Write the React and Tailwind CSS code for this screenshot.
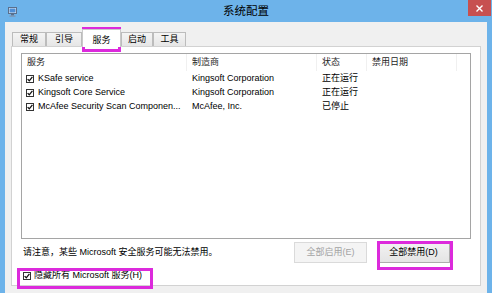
import React from 'react';

const FONT = { fontFamily: '"Liberation Sans", "Noto Sans CJK SC", sans-serif' };

const services = [
  { name: 'KSafe service', maker: 'Kingsoft Corporation', state: '正在运行' },
  { name: 'Kingsoft Core Service', maker: 'Kingsoft Corporation', state: '正在运行' },
  { name: 'McAfee Security Scan Componen...', maker: 'McAfee, Inc.', state: '已停止' },
];

function Check() {
  return (
    <span className="w-[8px] h-[8px] border border-[#333] bg-white flex items-center justify-center shrink-0">
      <svg width="6" height="6" viewBox="0 0 6 6">
        <path d="M0.6 3.1 L2.3 4.8 L5.4 0.9" fill="none" stroke="#111" strokeWidth="1.3" />
      </svg>
    </span>
  );
}

function Tab({ label, active, w }) {
  if (active) {
    return (
      <div className={`h-[18px] -mb-px z-10 pt-[4px] flex justify-center bg-white border border-b-0 border-[#c9c9c9] text-[9px] text-black ${w}`}>
        {label}
      </div>
    );
  }
  return (
    <div className={`h-[14px] flex items-center justify-center bg-gradient-to-b from-[#f4f4f4] to-[#e6e6e6] border border-b-0 border-[#bcbcbc] text-[9px] text-black ${w}`}>
      {label}
    </div>
  );
}

export default function App() {
  return (
    <div className="relative w-[492px] h-[293px] bg-[#6db3ea] flex flex-col overflow-hidden" style={FONT}>
      {/* Title bar */}
      <div className="h-[22px] grid grid-cols-[1fr_auto_1fr] shrink-0">
        <div className="pl-[8px] pt-[7px]">
          <svg width="9" height="10" viewBox="0 0 9 10">
            <rect x="0.5" y="0.5" width="8" height="6" fill="#dfe9f5" stroke="#5a6f8c" />
            <rect x="1.5" y="1.5" width="6" height="4" fill="#4f8fd6" />
            <rect x="3" y="7" width="3" height="1.5" fill="#5a6f8c" />
            <rect x="1.5" y="8.5" width="6" height="1.2" fill="#8093ad" />
          </svg>
        </div>
        <div className="text-[11.5px] text-black flex items-center pt-px">系统配置</div>
        <div className="flex justify-end items-start pr-[1px]">
          <div className="w-[23px] h-[16px] bg-[#c75050] flex items-center justify-center">
            <svg width="7" height="7" viewBox="0 0 7 7">
              <path d="M0.5 0.5 L6.5 6.5 M6.5 0.5 L0.5 6.5" stroke="#fff" strokeWidth="1.4" />
            </svg>
          </div>
        </div>
      </div>

      {/* Dialog body */}
      <div className="flex-1 mx-[5px] bg-[#f0f0f0] px-[6px] pt-[7px] flex flex-col">
        <div className="h-[17px] flex items-end pl-px">
          <Tab label="常规" w="w-[34px]" />
          <Tab label="引导" w="w-[36px]" />
          <Tab label="服务" w="w-[39px]" active />
          <Tab label="启动" w="w-[32px]" />
          <Tab label="工具" w="w-[33px]" />
        </div>

        {/* Tab page */}
        <div className="h-[240px] bg-white border border-[#d2d2d2] px-[9px] pt-[6px] flex flex-col">
          <div className="h-[186px] border border-[#a5a5a5] bg-white flex flex-col">
            <div className="h-[17px] grid grid-cols-[165px_130px_50px_90px_1fr] text-[9px] text-[#1e1e1e]">
              <div className="pl-[5px] flex items-center border-r border-[#f0f0f0]">服务</div>
              <div className="pl-[5px] flex items-center border-r border-[#f0f0f0]">制造商</div>
              <div className="pl-[5px] flex items-center border-r border-[#f0f0f0]">状态</div>
              <div className="pl-[5px] flex items-center border-r border-[#f0f0f0]">禁用日期</div>
              <div />
            </div>
            <div className="h-px" />
            {services.map((s) => (
              <div key={s.name} className="h-[14px] grid grid-cols-[165px_130px_50px_90px_1fr] text-[9px] text-black items-center">
                <div className="pl-[4px] flex items-center gap-[4px] whitespace-nowrap">
                  <Check />
                  <span>{s.name}</span>
                </div>
                <div className="pl-[5px] whitespace-nowrap">{s.maker}</div>
                <div className="pl-[5px] whitespace-nowrap">{s.state}</div>
                <div />
                <div />
              </div>
            ))}
          </div>

          <div className="mt-[3px] h-[21px] flex items-center text-[9px]">
            <div className="flex-1 pl-[2px] text-black">请注意，某些 Microsoft 安全服务可能无法禁用。</div>
            <div className="w-[73px] h-[21px] bg-[#f4f4f4] border border-[#dadada] text-[#a3a3a3] flex items-center justify-center">
              全部启用(E)
            </div>
            <div className="w-[73px] h-[21px] ml-[10px] mr-[21px] bg-gradient-to-b from-[#f2f2f2] to-[#e4e4e4] border border-[#acacac] text-black flex items-center justify-center">
              全部禁用(D)
            </div>
          </div>

          <div className="mt-[5px] h-[15px] flex items-center gap-[3px] pl-[2px] text-[9px] text-black">
            <Check />
            <span>隐藏所有 Microsoft 服务(H)</span>
          </div>
        </div>
      </div>

      {/* Highlight annotations */}
      <div className="absolute left-[82px] top-[27px] w-[39px] h-[25px] border-[3px] border-[#dc2adc]" />
      <div className="absolute left-[377px] top-[241px] w-[76px] h-[29px] border-[3px] border-[#dc2adc]" />
      <div className="absolute left-[17px] top-[268px] w-[136px] h-[21px] border-[3px] border-[#dc2adc]" />
    </div>
  );
}
